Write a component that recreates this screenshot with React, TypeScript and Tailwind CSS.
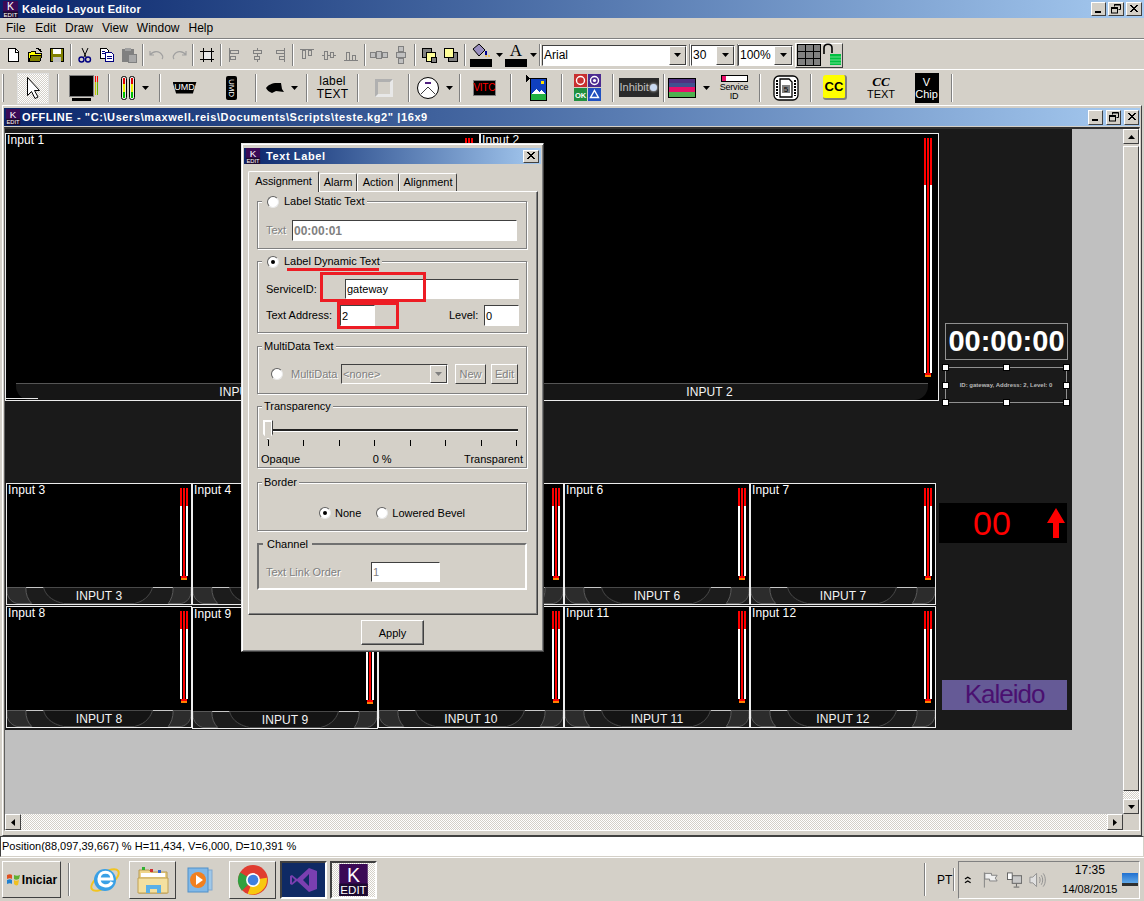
import React from 'react';

const RAISED = 'border border-t-white border-l-white border-r-[#404040] border-b-[#404040] bg-[#d4d0c8]';
const SUNKEN = 'border border-t-[#404040] border-l-[#404040] border-r-white border-b-white bg-white';
const HATCH = 'bg-[repeating-conic-gradient(#d4d0c8_0_25%,#fff_0_50%)] bg-[length:2px_2px]';

function KLogo({ className = 'w-[16px] h-[18px]' }: { className?: string }) {
  return (
    <svg viewBox="0 0 16 18" className={className + ' shrink-0'}>
      <rect width="16" height="18" fill="#3b0a56" />
      <rect y="11" width="16" height="7" fill="#1c0a30" />
      <text x="8" y="10" textAnchor="middle" fontSize="11" fill="#fff" fontFamily="Liberation Sans">K</text>
      <text x="8" y="17" textAnchor="middle" fontSize="6.5" fill="#fff" fontFamily="Liberation Sans">EDIT</text>
    </svg>
  );
}

function WinBtn({ kind, className = 'w-[15px] h-[14px]' }: { kind: 'min' | 'max' | 'close'; className?: string }) {
  return (
    <div className={RAISED + ' flex items-center justify-center ' + className}>
      <svg viewBox="0 0 12 10" className="w-[12px] h-[10px]">
        {kind === 'min' && <rect x="2" y="7" width="6" height="2" fill="#000" />}
        {kind === 'max' && (
          <g fill="none" stroke="#000">
            <path d="M4.5 2.5V.5h6v5H8.5" />
            <path d="M4 1h6.5" />
            <rect x="1.5" y="3.5" width="6" height="5.5" />
            <path d="M1.5 4.5h6" />
          </g>
        )}
        {kind === 'close' && <path d="M2 1l7 7M3 1l7 7M9 1L2 8M10 1L3 8" stroke="#000" fill="none" />}
      </svg>
    </div>
  );
}

function Sep1() {
  return <div className="w-[6px] h-[22px] shrink-0 flex justify-center"><div className="w-[2px] h-full border-l border-l-[#808080] border-r border-r-white" /></div>;
}
function Sep2() {
  return <div className="w-[2px] h-[28px] shrink-0 border-l border-l-[#808080] border-r border-r-white" />;
}

function TB({ children }: { children: React.ReactNode }) {
  return <div className="w-[22px] h-[22px] shrink-0 flex items-center justify-center">{children}</div>;
}

function Ico({ children, w = 16, h = 16 }: { children: React.ReactNode; w?: number; h?: number }) {
  return <svg width={w} height={h} viewBox={`0 0 ${w} ${h}`} fill="none" shapeRendering="crispEdges">{children}</svg>;
}

const AlignH = ({ a }: { a: number }) => (
  <Ico>
    <g fill="#808080" stroke="#808080">
      <path d={a === 0 ? 'M2.5 1v14' : a === 1 ? 'M8.5 1v14' : 'M13.5 1v14'} />
      <rect x={a === 0 ? 3 : a === 1 ? 4 : 5} y="3" width="8" height="3" fill="#d4d0c8" />
      <rect x={a === 0 ? 3 : a === 1 ? 5 : 8} y="9" width="5" height="3" fill="#d4d0c8" />
    </g>
  </Ico>
);
const AlignV = ({ a }: { a: number }) => (
  <Ico>
    <g fill="#808080" stroke="#808080">
      <path d={a === 0 ? 'M1 2.5h14' : a === 1 ? 'M1 8.5h14' : 'M1 13.5h14'} />
      <rect x="3" y={a === 0 ? 3 : a === 1 ? 4 : 5} width="3" height="8" fill="#d4d0c8" />
      <rect x="9" y={a === 0 ? 3 : a === 1 ? 5 : 8} width="3" height="5" fill="#d4d0c8" />
    </g>
  </Ico>
);

function Combo({ text, className, arrow, dis }: { text: string; className: string; arrow: string; dis?: boolean }) {
  return (
    <div className={SUNKEN + ' flex items-stretch ' + className}>
      <div className={'flex-1 pl-[1px] flex items-center overflow-hidden leading-none ' + (dis ? 'bg-[#d4d0c8] text-[#808080] [text-shadow:1px_1px_0_#fff]' : '')}>{text}</div>
      <div className={RAISED + ' flex items-center justify-center ' + arrow}>
        <svg width="7" height="4" viewBox="0 0 7 4"><path d="M0 0h7L3.5 4z" fill={dis ? '#808080' : '#000'} /></svg>
      </div>
    </div>
  );
}

function Drop() {
  return <svg width="7" height="4" viewBox="0 0 7 4" className="shrink-0"><path d="M0 0h7L3.5 4z" fill="#000" /></svg>;
}

function Slot({ w = 'w-[49px]', children }: { w?: string; children?: React.ReactNode }) {
  return <div className={w + ' h-[30px] shrink-0 flex items-center justify-center gap-[7px]'}>{children}</div>;
}

function Toolbar1() {
  return (
    <div className="h-[32px] shrink-0 flex items-center pl-[2px] pt-[2px] border-t border-t-[#808080] border-b border-b-white shadow-[inset_0_1px_0_#fff]">
      <TB><Ico><path d="M3.5 1.5h7l3 3v10h-10z" fill="#fff" stroke="#000" /><path d="M10 2v3h3" stroke="#000" /></Ico></TB>
      <TB><Ico><path d="M1.5 14.5V5.5h2l1-1h4v2h6l-2 8z" fill="#ffff00" stroke="#000" /><path d="M2 14l2-6h11l-2 6z" fill="#808000" stroke="#000" /><path d="M9 2c2-1 3 0 4 2M13 2v2h2" stroke="#000" /></Ico></TB>
      <TB><Ico><rect x="1.5" y="1.5" width="13" height="13" fill="#808000" stroke="#000" /><rect x="4" y="2" width="8" height="5" fill="#fff" /><rect x="4" y="10" width="8" height="5" fill="#c0c0c0" /></Ico></TB>
      <Sep1 />
      <TB><svg width="16" height="16" viewBox="0 0 16 16" fill="none"><path d="M5 1l4 9M11 1L7 10" stroke="#000" /><circle cx="4.5" cy="12.5" r="2.5" stroke="#000080" strokeWidth="1.4" /><circle cx="11" cy="12.5" r="2.5" stroke="#000080" strokeWidth="1.4" /></svg></TB>
      <TB><Ico><path d="M1.5 1.5h6l2 2v8h-8z" fill="#fff" stroke="#000" /><path d="M6.5 5.5h6l2 2v7h-8z" fill="#fff" stroke="#000080" /><path d="M8 9h5M8 11h5M3 4h3M3 6h3" stroke="#000080" /></Ico></TB>
      <TB><Ico><rect x="1.5" y="2.5" width="11" height="12" fill="#808080" stroke="#808080" /><rect x="4" y="1" width="6" height="3" fill="#a0a0a0" /><rect x="7" y="7" width="8" height="8" fill="#a8a8a8" stroke="#808080" /></Ico></TB>
      <Sep1 />
      <TB><svg width="16" height="10" viewBox="0 0 16 10" fill="none"><path d="M1 1v4h4M1 5c3-4 9-5 12 0 1 1 1 3 0 4" stroke="#a0a0a0" strokeWidth="1.2" /></svg></TB>
      <TB><svg width="16" height="10" viewBox="0 0 16 10" fill="none"><path d="M15 1v4h-4M15 5C12 1 6 0 3 5c-1 1-1 3 0 4" stroke="#a0a0a0" strokeWidth="1.2" /></svg></TB>
      <Sep1 />
      <TB><Ico w={16} h={16}><path d="M4.5 1v14M12.5 1v14M1 4.5h14M1 12.5h14" stroke="#000" /><rect x="5" y="5" width="7" height="7" fill="#e8e8e8" /></Ico></TB>
      <Sep1 />
      <TB><AlignH a={0} /></TB>
      <TB><AlignH a={1} /></TB>
      <TB><AlignH a={2} /></TB>
      <Sep1 />
      <TB><AlignV a={0} /></TB>
      <TB><AlignV a={1} /></TB>
      <TB><AlignV a={2} /></TB>
      <Sep1 />
      <TB><Ico w={18} h={12}><g fill="#c0c0c0" stroke="#808080"><rect x="0.5" y="3.5" width="5" height="5" /><rect x="6.5" y="2.5" width="5" height="7" /><rect x="12.5" y="3.5" width="5" height="5" /></g></Ico></TB>
      <TB><Ico w={12} h={18}><g fill="#c0c0c0" stroke="#808080"><rect x="3.5" y="0.5" width="5" height="5" /><rect x="1.5" y="6.5" width="9" height="5" /><rect x="3.5" y="12.5" width="5" height="5" /></g></Ico></TB>
      <Sep1 />
      <TB><Ico><rect x="1.5" y="1.5" width="9" height="9" fill="#808080" stroke="#000" /><rect x="5.5" y="5.5" width="9" height="9" fill="#ffff99" stroke="#000" /><rect x="10" y="10" width="5" height="5" fill="#808080" stroke="#000" /></Ico></TB>
      <TB><Ico><rect x="5.5" y="5.5" width="9" height="9" fill="#808080" stroke="#000" /><rect x="1.5" y="1.5" width="9" height="9" fill="#ffff99" stroke="#000" /></Ico></TB>
      <Sep1 />
      <div className="w-[24px] h-[24px] shrink-0 flex flex-col items-center justify-between ml-[1px]">
        <svg width="22" height="15" viewBox="0 0 22 15" fill="none"><path d="M3 6l6-5 6 6-6 6z" fill="#9a8fc0" stroke="#000" /><path d="M16 8v4" stroke="#000090" strokeWidth="2" /><path d="M15 13h2M18 13h2" stroke="#ffb000" /></svg>
        <div className="w-[22px] h-[8px] bg-black" />
      </div>
      <div className="ml-[3px] w-[7px] flex shrink-0"><Drop /></div>
      <div className="ml-[1px] w-[24px] h-[24px] shrink-0 flex flex-col items-center justify-between">
        <span className="text-[17px] leading-[15px] font-['Liberation_Serif',serif] text-black">A</span>
        <div className="w-[22px] h-[8px] bg-black" />
      </div>
      <div className="ml-[2px] w-[7px] flex shrink-0"><Drop /></div>
      <Sep1 />
      <Combo text="Arial" className="w-[145px] h-[21px] text-[12px] ml-[-1px]" arrow="w-[17px]" />
      <Sep1 />
      <Combo text="30" className="w-[44px] h-[21px] text-[12px] ml-[-2px]" arrow="w-[18px]" />
      <Sep1 />
      <Combo text="100%" className="w-[55px] h-[21px] text-[12px] ml-[-3px]" arrow="w-[18px]" />
      <div className={RAISED + ' ml-[2px] w-[48px] h-[25px] flex items-center gap-[1px] pl-[1px] shrink-0'}>
        <svg width="24" height="22" viewBox="0 0 24 22" fill="none" shapeRendering="crispEdges"><rect width="24" height="22" fill="#000" /><rect x="1" y="1" width="22" height="20" fill="#808080" /><path d="M1 7.5h22M1 14.5h22M8.5 1v20M16 1v20" stroke="#000" /></svg>
        <svg width="20" height="24" viewBox="0 0 20 24" fill="none"><path d="M2 11V5c0-5 8-5 8 0v5" stroke="#000" strokeWidth="1.6" /><rect x="8" y="11" width="11" height="11" fill="#00c040" /><path d="M8 14h11M8 17h11M8 20h11" stroke="#70e090" /></svg>
      </div>
    </div>
  );
}

const Toolbar2 = () => (
  <div className="h-[35px] shrink-0 flex items-center pl-[2px]">
    <div className="w-[2px] h-[28px] mr-[4px] border-l border-l-white border-r border-r-[#808080] shrink-0" />
    <div className="w-[49px] h-[30px] flex justify-center shrink-0">
      <div className={HATCH + ' w-[32px] h-[31px] border border-[#e0e0e0] flex items-center justify-center'}>
        <svg width="14" height="24" viewBox="0 0 14 24"><path d="M1.5 1.5v18l4-4 3.5 7 3-1.5-3.5-6.5h5z" fill="#fff" stroke="#000" /></svg>
      </div>
    </div>
    <Sep2 />
    <Slot>
      <svg width="30" height="26" viewBox="0 0 30 26" fill="none" shapeRendering="crispEdges"><rect x="0.5" y="0.5" width="24" height="21" fill="#000" stroke="#808080" /><path d="M3 24h19" stroke="#000" strokeWidth="3" /><rect x="26" y="1" width="1" height="6" fill="#f00" /><rect x="28" y="1" width="1" height="6" fill="#f00" /><rect x="26" y="7" width="1" height="13" fill="#c8c800" /><rect x="28" y="7" width="1" height="13" fill="#60b000" /></svg>
    </Slot>
    <Sep2 />
    <Slot>
      <svg width="14" height="24" viewBox="0 0 14 24" fill="none"><rect x="0.5" y="0.5" width="5" height="23" rx="2" fill="#e8e8e8" stroke="#000" /><rect x="8.5" y="0.5" width="5" height="23" rx="2" fill="#e8e8e8" stroke="#000" /><rect x="2" y="2" width="2" height="6" fill="#e00000" /><rect x="10" y="2" width="2" height="6" fill="#e00000" /><rect x="2" y="8" width="2" height="8" fill="#f0f000" /><rect x="10" y="8" width="2" height="8" fill="#f0f000" /><rect x="2" y="16" width="2" height="6" fill="#00c000" /><rect x="10" y="16" width="2" height="6" fill="#00c000" /></svg>
      <Drop />
    </Slot>
    <Sep2 />
    <Slot w="w-[47px]">
      <div className="w-[24px] h-[12px] bg-black text-white text-[9px] leading-[11px] text-center [clip-path:polygon(0_0,100%_0,85%_100%,15%_100%)]">UMD</div>
    </Slot>
    <Slot w="w-[47px]">
      <div className="w-[11px] h-[24px] bg-black rounded-[2px] text-white text-[8px] flex items-center justify-center overflow-hidden"><span className="rotate-90 leading-none">UMD</span></div>
    </Slot>
    <Sep2 />
    <Slot>
      <svg width="18" height="10" viewBox="0 0 18 10"><path d="M0 5C2 2 6 0 11 0h4l1 6 2 3-8-1-4 2C3 9 1 7 0 5z" fill="#000" /></svg>
      <Drop />
    </Slot>
    <Sep2 />
    <Slot>
      <div className="flex flex-col items-center text-[12px] leading-[13px] text-black tracking-[0.2px]"><span>label</span><span>TEXT</span></div>
    </Slot>
    <Sep2 />
    <Slot>
      <div className="w-[18px] h-[18px] border-[3px] border-t-[#b0b0b0] border-l-[#b0b0b0] border-r-[#e8e8e8] border-b-[#e8e8e8] bg-[#d4d0c8]" />
    </Slot>
    <Sep2 />
    <Slot>
      <svg width="22" height="22" viewBox="0 0 22 22" fill="none"><circle cx="11" cy="11" r="10.5" fill="#fff" stroke="#000" /><rect x="8" y="5" width="6" height="2" fill="#502080" /><path d="M4 17l7-7 7 7" stroke="#404040" /></svg>
      <Drop />
    </Slot>
    <Sep2 />
    <Slot>
      <div className="w-[23px] h-[16px] bg-black border border-[#808080] text-[#ff0000] text-[10px] leading-[14px] text-center tracking-[-0.3px] mr-[3px]">VITC</div>
    </Slot>
    <Sep2 />
    <Slot>
      <svg width="22" height="26" viewBox="0 0 22 26" fill="none" shapeRendering="crispEdges"><path d="M0 0l4 3.5L0 7z" fill="#000" /><rect x="4.5" y="3.5" width="16" height="22" fill="#1040c0" stroke="#000" /><rect x="5" y="19" width="15" height="6" fill="#20b040" /><path d="M6 19l4-5 3 3 2-2 4 4z" fill="#fff" /><rect x="15" y="6" width="3" height="3" fill="#ffe000" /></svg>
    </Slot>
    <Sep2 />
    <Slot>
      <svg width="27" height="27" viewBox="0 0 27 27" fill="none"><rect width="13" height="13" fill="#c83030" /><rect x="14" width="13" height="13" fill="#4b2a90" /><rect y="14" width="13" height="13" fill="#209040" /><rect x="14" y="14" width="13" height="13" fill="#2050c0" /><circle cx="6.5" cy="6.5" r="4" stroke="#fff" strokeWidth="1.4" /><circle cx="20.5" cy="6.5" r="4" stroke="#fff" strokeWidth="1.4" /><circle cx="20.5" cy="6.5" r="1.6" fill="#fff" /><path d="M20.5 16.5l4 7h-8z" stroke="#fff" strokeWidth="1.4" /><text x="6.5" y="24" textAnchor="middle" fontSize="7.5" fontWeight="bold" fill="#fff" fontFamily="Liberation Sans">OK</text></svg>
    </Slot>
    <Sep2 />
    <Slot>
      <div className="w-[40px] h-[19px] bg-[#2a2a2a] text-[#c0c0c0] text-[11px] leading-[19px] pl-[1px] flex items-center gap-[1px] shrink-0">Inhibit<span className="w-[7px] h-[7px] rounded-full bg-[#c8d8f0] shadow-[0_0_3px_#fff]" /></div>
    </Slot>
    <Sep2 />
    <Slot w="w-[47px]">
      <svg width="28" height="20" viewBox="0 0 28 20" shapeRendering="crispEdges"><rect width="28" height="20" fill="#000" /><rect x="1" y="1" width="26" height="4" fill="#503080" /><rect x="1" y="5" width="26" height="4" fill="#405090" /><rect x="1" y="9" width="26" height="5" fill="#e8106a" /><rect x="1" y="14" width="26" height="5" fill="#50b050" /></svg>
      <Drop />
    </Slot>
    <Slot w="w-[47px]">
      <div className="flex flex-col items-center leading-[9px] text-[9px] tracking-[-0.2px] text-black mr-[3px]">
        <div className="w-[27px] h-[7px] border border-black bg-white mb-[1px] flex"><div className="w-[4px] bg-[#e8106a]" /></div>
        <span>Service</span><span>ID</span>
      </div>
    </Slot>
    <Sep2 />
    <Slot>
      <svg width="26" height="26" viewBox="0 0 26 26" fill="none"><rect x="1" y="1" width="24" height="24" rx="5" fill="#fff" stroke="#000" strokeWidth="1.3" /><path d="M7 4h9l3 3v15H7z" fill="#fff" stroke="#000" strokeWidth="1.3" /><path d="M4 5v16M22 5v16" stroke="#000" strokeWidth="2" strokeDasharray="2 1" /><rect x="9" y="10" width="8" height="8" fill="#808080" /><text x="13" y="17" textAnchor="middle" fontSize="8" fill="#000" fontFamily="Liberation Sans">5</text></svg>
    </Slot>
    <Sep2 />
    <Slot w="w-[46px]">
      <div className="w-[24px] h-[25px] rounded-[3px] bg-[#ffff00] border-r-2 border-b-2 border-r-[#808080] border-b-[#808080] text-black text-[13px] font-bold flex items-center justify-center leading-none">CC</div>
    </Slot>
    <Slot w="w-[46px]">
      <div className="flex flex-col items-center text-[11px] leading-[12px] text-black"><span className="italic font-bold font-['Liberation_Serif',serif] text-[13px] leading-[12px]">CC</span><span>TEXT</span></div>
    </Slot>
    <Slot w="w-[47px]">
      <div className="w-[24px] h-[30px] bg-black text-white text-[11px] leading-[12px] text-center pt-[3px] mr-[2px]">V<br />Chip</div>
    </Slot>
    <Sep2 />
  </div>
);

function Meter({ big }: { big?: boolean }) {
  return (
    <div className={'absolute flex flex-col w-[8px] ' + (big ? 'right-[6px] top-[4px] h-[239px]' : 'right-[3px] top-[4px] h-[92px]')}>
      <div className={(big ? 'h-[47px]' : 'h-[18px]') + ' shrink-0 flex justify-between'}>
        <div className="w-[2px] bg-[#f00]" /><div className="w-[2px] bg-[#f00]" /><div className="w-[2px] bg-[#f00]" />
      </div>
      <div className="flex-1 flex justify-between">
        <div className="w-[2px] bg-white" /><div className="w-[2px] bg-[#f00]" /><div className="w-[2px] bg-white" />
      </div>
      <div className="h-[2px] mx-[1px] bg-[#f00]" />
      <div className="h-[2px] mx-[1px] bg-[#ff8000]" />
    </div>
  );
}

function Footer({ label, big }: { label: string; big?: boolean }) {
  return (
    <div className="absolute left-0 right-0 bottom-0 h-[17px] flex items-center justify-center">
      {big ? (
        <>
          <div className="absolute left-[10px] right-[10px] top-0 bottom-0 bg-[#161616] border-t border-t-[#555] rounded-bl-[14px] rounded-br-[14px]" />
          <div className="absolute left-0 w-[32px] bottom-[1px] h-[1px] bg-[#e8e8e8]" />
        </>
      ) : (
        <svg className="absolute inset-0 w-full h-full" viewBox="0 0 186 17" preserveAspectRatio="none" fill="none">
          <rect width="186" height="17" fill="#1c1c1c" />
          <path d="M19 .5h19M147 .5h21" stroke="#c8c8c8" />
          <path d="M37 .5c1 3 3 12 20 16h72c13-3 17-12 18-16z" fill="#141414" stroke="#4a4a4a" />
          <path d="M0 .5h19c0 7 2 12 6 16H10C4 15 0 10 0 4z" fill="#2c2c2c" stroke="#5a5a5a" />
          <path d="M186 .5h-18c0 7-2 12-5 16h13c6-1 10-6 10-12z" fill="#2c2c2c" stroke="#5a5a5a" />
        </svg>
      )}
      <span className="relative text-[12px] tracking-[0.1px] text-[#f4f4f4] leading-none">{label}</span>
    </div>
  );
}

function Tile({ name, label, className, big }: { name: string; label: string; className: string; big?: boolean }) {
  return (
    <div className={'relative shrink-0 bg-black border border-[#ececec] ' + className}>
      <div className="pl-[1px] text-[12px] leading-[13px] text-white tracking-[0.1px]">{name}</div>
      <Meter big={big} />
      <Footer label={label} big={big} />
    </div>
  );
}

function Radio({ on, dis }: { on?: boolean; dis?: boolean }) {
  return (
    <div className={'w-[12px] h-[12px] rounded-full border border-t-[#606060] border-l-[#606060] border-r-[#e8e8e8] border-b-[#e8e8e8] flex items-center justify-center shrink-0 bg-white ' + (dis ? 'bg-[#f0f0f0]' : '')}>
      {on && <div className="w-[4px] h-[4px] rounded-full bg-black" />}
    </div>
  );
}

function Group({ title, className, children, ch }: { title: React.ReactNode; className: string; children?: React.ReactNode; ch?: boolean }) {
  return (
    <div className={(ch ? 'border-2 border-t-[#707070] border-l-[#707070] border-r-white border-b-white ' : 'border border-[#808080] shadow-[1px_1px_0_#fff,inset_1px_1px_0_#fff] ') + 'relative w-[270px] shrink-0 ' + className}>
      <div className="absolute left-[4px] top-[-7px] bg-[#d4d0c8] leading-[13px] px-[2px] flex items-center gap-[5px]">{title}</div>
      {children}
    </div>
  );
}

function TextBox({ text, className, dis }: { text: string; className: string; dis?: boolean }) {
  return <div className={SUNKEN + ' flex items-center pl-[1px] pt-[1px] shrink-0 leading-none text-[11px] ' + (dis ? 'text-[#808080] ' : 'text-black ') + className}>{text}</div>;
}

const DIS = 'text-[#808080] [text-shadow:1px_1px_0_#fff]';
const TAB = 'h-[18px] border-l border-t border-r border-l-white border-t-white border-r-[#404040] rounded-t-[2px] text-center leading-[17px] text-[11px]';

function TextLabelDialog() {
  return (
    <div className="absolute left-[241px] top-[143px] w-[303px] h-[509px] bg-[#d4d0c8] border border-t-[#e8e8e8] border-l-[#e8e8e8] border-r-[#404040] border-b-[#404040] p-[2px] text-[11px] text-black shadow-[inset_1px_1px_0_#fff,inset_-1px_-1px_0_#808080]">
      <div className="h-[16px] mt-[2px] flex items-center pr-[2px] bg-gradient-to-r from-[#0a246a] to-[#a6caf0]">
        <KLogo className="w-[16px] h-[16px] ml-[1px]" />
        <span className="ml-[5px] flex-1 text-white font-bold text-[11px] tracking-[0.6px]">Text Label</span>
        <WinBtn kind="close" className="w-[16px] h-[13px]" />
      </div>
      <div className="flex items-end h-[21px] mt-[6px] ml-[4px] relative z-10">
        <div className="w-[71px] h-[21px] mb-[-1px] bg-[#d4d0c8] border-l border-t border-r border-l-white border-t-white border-r-[#404040] rounded-t-[2px] text-center leading-[19px] text-[11px] tracking-[-0.1px]">Assignment</div>
        <div className={TAB + ' w-[38px]'}>Alarm</div>
        <div className={TAB + ' w-[42px]'}>Action</div>
        <div className={TAB + ' w-[58px]'}>Alignment</div>
      </div>
      <div className="ml-[4px] w-[290px] h-[424px] border border-t-white border-l-white border-r-[#404040] border-b-[#404040] shadow-[inset_-1px_-1px_0_#808080] pl-[8px] pt-[9px] flex flex-col">
        <Group className="h-[48px]" title={<><div className="ml-[3px]"><Radio /></div><span>Label Static Text</span></>}>
          <div className="flex items-center pl-[8px] pt-[18px] gap-[4px]">
            <span className={DIS + ' w-[22px]'}>Text</span>
            <TextBox dis text="00:00:01" className="w-[225px] h-[21px] font-bold text-[12px]" />
          </div>
        </Group>
        <Group className="h-[72px] mt-[12px]" title={<><div className="ml-[3px]"><Radio on /></div><span>Label Dynamic Text</span></>}>
          <div className="flex items-center pl-[8px] pt-[17px]">
            <span className="w-[79px]">ServiceID:</span>
            <TextBox text="gateway" className="w-[174px] h-[20px]" />
          </div>
          <div className="flex items-center pl-[8px] pt-[6px]">
            <span className="w-[74px]">Text Address:</span>
            <TextBox text="2" className="w-[35px] h-[21px]" />
            <span className="ml-[74px] w-[35px]">Level:</span>
            <TextBox text="0" className="w-[35px] h-[21px]" />
          </div>
        </Group>
        <Group className="h-[48px] mt-[13px]" title={<span>MultiData Text</span>}>
          <div className="flex items-center pl-[13px] pt-[17px]">
            <Radio dis />
            <span className={DIS + ' ml-[8px] w-[50px]'}>MultiData</span>
            <Combo dis text="<none>" className="w-[107px] h-[20px] text-[11px]" arrow="w-[17px]" />
            <div className={RAISED + ' ' + DIS + ' ml-[7px] w-[31px] h-[20px] text-center leading-[18px]'}>New</div>
            <div className={RAISED + ' ' + DIS + ' ml-[5px] w-[27px] h-[20px] text-center leading-[18px]'}>Edit</div>
          </div>
        </Group>
        <Group className="h-[62px] mt-[12px]" title={<span>Transparency</span>}>
          <div className="relative h-[23px] mt-[13px] mx-[5px] flex items-center">
            <div className="absolute left-0 top-0 w-[10px] h-[20px] bg-[#d4d0c8] border border-t-white border-l-white border-r-[#404040] [clip-path:polygon(0_0,100%_0,100%_70%,50%_100%,0_70%)] shadow-[inset_0_0_0_1px_#fff]" />
            <div className="ml-[10px] w-[245px] h-[2px] mt-[-4px] bg-[#222] shadow-[0_1px_0_#fff]" />
          </div>
          <div className="flex justify-between w-[249px] ml-[10px] mt-[-3px]">
            {[0, 1, 2, 3, 4, 5, 6, 7].map((i) => <div key={i} className="w-[1px] h-[6px] bg-black" />)}
          </div>
          <div className="flex justify-between px-[3px] mt-[7px] leading-[13px]"><span>Opaque</span><span>0 %</span><span>Transparent</span></div>
        </Group>
        <Group className="h-[49px] mt-[14px]" title={<span>Border</span>}>
          <div className="flex items-center pl-[61px] pt-[22px]">
            <Radio on /><span className="ml-[4px]">None</span>
            <div className="ml-[15px]"><Radio /></div><span className="ml-[4px]">Lowered Bevel</span>
          </div>
        </Group>
        <Group ch className="h-[47px] mt-[12px]" title={<span className="px-[2px]">Channel</span>}>
          <div className="flex items-center pl-[7px] pt-[17px]">
            <span className={DIS + ' w-[105px]'}>Text Link Order</span>
            <TextBox dis text="1" className="w-[69px] h-[20px]" />
          </div>
        </Group>
      </div>
      <div className={RAISED + ' mt-[5px] ml-[117px] w-[63px] h-[25px] text-center leading-[25px] shadow-[inset_-1px_-1px_0_#808080]'}>Apply</div>
      {/* red annotation marks drawn over the dialog */}
      <div className="absolute left-[45px] top-[124px] w-[92px] h-[3px] bg-[#ed1c24]" />
      <div className="absolute left-[78px] top-[128px] w-[106px] h-[30px] border-[3px] border-[#ed1c24]" />
      <div className="absolute left-[95px] top-[158px] w-[62px] h-[27px] border-[3px] border-[#ed1c24]" />
    </div>
  );
}

function Handle({ className }: { className: string }) {
  return <div className={'absolute w-[7px] h-[7px] bg-white border border-black ' + className} />;
}

function Canvas() {
  return (
    <div className="w-[1067px] h-[601px] bg-[#1a1a1a] flex shrink-0">
      <div className="w-[935px] shrink-0 flex flex-col pt-[4px]">
        <div className="flex">
          <Tile big name="Input 1" label="INPUT 1" className="w-[475px] h-[268px]" />
          <Tile big name="Input 2" label="INPUT 2" className="w-[459px] h-[268px]" />
        </div>
        <div className="flex ml-[1px] mt-[82px]">
          <Tile name="Input 3" label="INPUT 3" className="w-[186px] h-[122px]" />
          <Tile name="Input 4" label="INPUT 4" className="w-[186px] h-[122px]" />
          <Tile name="Input 5" label="INPUT 5" className="w-[186px] h-[122px]" />
          <Tile name="Input 6" label="INPUT 6" className="w-[186px] h-[122px]" />
          <Tile name="Input 7" label="INPUT 7" className="w-[186px] h-[122px]" />
        </div>
        <div className="flex ml-[1px] mt-[1px]">
          <Tile name="Input 8" label="INPUT 8" className="w-[186px] h-[122px]" />
          <Tile name="Input 9" label="INPUT 9" className="w-[186px] h-[122px] mt-[1px]" />
          <Tile name="Input 10" label="INPUT 10" className="w-[186px] h-[122px]" />
          <Tile name="Input 11" label="INPUT 11" className="w-[186px] h-[122px]" />
          <Tile name="Input 12" label="INPUT 12" className="w-[186px] h-[122px]" />
        </div>
      </div>
      <div className="flex-1 flex flex-col items-start pl-[5px]">
        <div className="mt-[194px] w-[123px] h-[37px] border border-[#909090] text-white font-bold text-[29px] leading-[35px] text-center">00:00:00</div>
        <div className="relative mt-[7px] w-[122px] h-[36px] border border-[#909090] text-[#b8b8b8] font-bold text-[6px] leading-[34px] text-center">
          ID: gateway, Address: 2, Level: 0
          <Handle className="left-[-4px] top-[-4px]" />
          <Handle className="left-[57px] top-[-4px]" />
          <Handle className="right-[-4px] top-[-4px]" />
          <Handle className="left-[-4px] top-[14px]" />
          <Handle className="right-[-4px] top-[14px]" />
          <Handle className="left-[-4px] bottom-[-4px]" />
          <Handle className="left-[57px] bottom-[-4px]" />
          <Handle className="right-[-4px] bottom-[-4px]" />
        </div>
        <div className="mt-[100px] ml-[-6px] w-[128px] h-[40px] bg-black flex items-center">
          <span className="ml-[34px] text-[#ff0000] text-[34px] leading-none">00</span>
          <svg width="20" height="30" viewBox="0 0 20 30" className="ml-auto mr-[1px]"><path d="M10 0l9 15h-6v15H7V15H1z" fill="#f00" /></svg>
        </div>
        <div className="mt-[137px] ml-[-3px] w-[125px] h-[30px] bg-[#655a96] text-[#4a1070] text-[26px] leading-[29px] text-center tracking-[-1px]">Kaleido</div>
      </div>
    </div>
  );
}

function MdiWindow() {
  return (
    <div className="h-[731px] shrink-0 mx-[2px] border border-t-white border-l-white border-r-[#404040] border-b-[#404040] flex flex-col text-white">
      <div className="h-[18px] mt-[2px] mx-[1px] flex items-center bg-gradient-to-r from-[#0a246a] to-[#a6caf0] shrink-0">
        <KLogo className="w-[16px] h-[16px] ml-[1px]" />
        <span className="ml-[1px] flex-1 font-bold text-[11px] tracking-[0.6px] whitespace-nowrap">OFFLINE - "C:\Users\maxwell.reis\Documents\Scripts\teste.kg2" |16x9</span>
        <div className="flex gap-[3px] mr-[1px]">
          <WinBtn kind="min" className="w-[15px] h-[15px]" />
          <WinBtn kind="max" className="w-[15px] h-[15px]" />
          <WinBtn kind="close" className="w-[15px] h-[15px]" />
        </div>
      </div>
      <div className="flex-1 flex flex-col mt-[1px] mx-[1px] mb-[4px] border-t-2 border-l border-t-[#303030] border-l-[#606060] border-r border-b border-r-white border-b-white min-h-0">
        <div className="flex-1 flex min-h-0">
          <div className="flex-1 bg-[#c0c0c0] min-w-0">
            <Canvas />
          </div>
          <div className="w-[16px] flex flex-col shrink-0">
            <div className={RAISED + ' h-[15px] flex items-center justify-center shrink-0'}>
              <svg width="7" height="4" viewBox="0 0 7 4"><path d="M0 4h7L3.5 0z" fill="#000" /></svg>
            </div>
            <div className={RAISED + ' flex-1 mt-[2px]'} />
            <div className={HATCH + ' h-[8px] shrink-0'} />
            <div className={RAISED + ' h-[15px] flex items-center justify-center shrink-0'}><Drop /></div>
          </div>
        </div>
        <div className="h-[16px] flex shrink-0">
          <div className={RAISED + ' w-[16px] flex items-center justify-center'}>
            <svg width="4" height="7" viewBox="0 0 4 7"><path d="M4 0v7L0 3.5z" fill="#000" /></svg>
          </div>
          <div className={HATCH + ' flex-1'} />
          <div className={RAISED + ' w-[16px] flex items-center justify-center'}>
            <svg width="4" height="7" viewBox="0 0 4 7"><path d="M0 0v7l4-3.5z" fill="#000" /></svg>
          </div>
          <div className="w-[16px] bg-[#d4d0c8]" />
        </div>
      </div>
    </div>
  );
}

function TaskBtn({ children, on, dark, className = 'w-[47px]' }: { children: React.ReactNode; on?: boolean; dark?: boolean; className?: string }) {
  const c = on ? 'border-2 border-t-[#404040] border-l-[#404040] border-r-white border-b-white ' + (dark ? 'bg-[#0f2a64]' : HATCH) : 'border border-t-white border-l-white border-r-[#404040] border-b-[#404040] bg-[#d4d0c8]';
  return <div className={'h-[38px] shrink-0 flex items-center justify-center ' + c + ' ' + className}>{children}</div>;
}

function Taskbar() {
  return (
    <div className="flex-1 flex items-center bg-[#d4d0c8] border-t border-t-white pl-[2px] pr-[4px] text-black">
      <div className={RAISED + ' w-[59px] h-[37px] flex items-center justify-center gap-[1px] shrink-0'}>
        <svg width="15" height="14" viewBox="0 0 15 14"><path d="M1 2c2-1 4-1 5 0v4C5 5 3 5 1 6z" fill="#e05020" /><path d="M8 2c2 1 4 1 6 0l-1 4c-2 1-4 1-5 0z" fill="#60b030" /><path d="M1 7c2-1 4-1 5 0v4c-1-1-3-1-5 0z" fill="#2080d0" /><path d="M8 7c1 1 3 1 5 0l-1 5c-2 1-3 0-4-1z" fill="#f0c020" /></svg>
        <span className="font-bold text-[12px]">Iniciar</span>
      </div>
      <div className="ml-[7px] w-[2px] h-[33px] border-l border-l-[#808080] border-r border-r-white shrink-0" />
      <div className="ml-[11px] w-[47px] h-[38px] flex items-center justify-center shrink-0">
        <svg width="34" height="32" viewBox="0 0 34 32" fill="none"><ellipse cx="17" cy="16" rx="16" ry="7" transform="rotate(-35 17 16)" stroke="#f2c420" strokeWidth="2" /><circle cx="17" cy="16" r="11" fill="#39a0e6" /><path d="M10 15h14c0-9-13-9-13 0 0 8 10 9 13 3" stroke="#fff" strokeWidth="3.2" /></svg>
      </div>
      <TaskBtn className="w-[47px] ml-[1px]">
        <svg width="32" height="30" viewBox="0 0 32 30" fill="none"><path d="M2 5h10l2 2h16v21H2z" fill="#efd58a" stroke="#b89a50" /><path d="M4 8h24v4H4z" fill="#fff" /><rect x="5" y="2" width="3" height="3" fill="#30b030" /><rect x="13" y="4" width="3" height="3" fill="#d03030" /><rect x="21" y="5" width="3" height="3" fill="#3060d0" /><path d="M1 13h30v15H1z" fill="#f4e0a0" stroke="#c0a050" /><path d="M9 20h15v8h-4v-4h-7v4H9z" fill="#5ab0e8" /></svg>
      </TaskBtn>
      <div className="ml-[1px] w-[47px] h-[38px] flex items-center justify-center shrink-0">
        <svg width="30" height="30" viewBox="0 0 30 30" fill="none"><rect x="10" y="5" width="16" height="20" fill="#a0c8e8" stroke="#80a8d0" /><rect x="2" y="3" width="20" height="24" fill="#80b8e8" stroke="#5090c8" /><circle cx="12" cy="15" r="8" fill="#f08020" /><path d="M10 10l7 5-7 5z" fill="#fff" /></svg>
      </div>
      <TaskBtn className="w-[47px] ml-[5px]">
        <svg width="32" height="32" viewBox="0 0 30 30"><circle cx="15" cy="15" r="14" fill="#e03c30" /><path d="M15 15L4.5 25A14 14 0 0 1 3 8z" fill="#30a040" /><path d="M15 15l13-2a14 14 0 0 1-18 15z" fill="#f8c810" /><circle cx="15" cy="15" r="6.5" fill="#fff" /><circle cx="15" cy="15" r="5" fill="#4080e0" /></svg>
      </TaskBtn>
      <TaskBtn on dark className="w-[47px] ml-[4px]">
        <svg width="30" height="28" viewBox="0 0 30 28" fill="none"><path d="M20 2l8 3v18l-8 3L8 15l-5 4-2-1V10l2-1 5 4zM20 8l-6 6 6 6z" fill="#7a3fb0" fillRule="evenodd" /><path d="M3 11v6l3-3z" fill="#0f2a64" /></svg>
      </TaskBtn>
      <TaskBtn on className="w-[47px] ml-[3px]">
        <KLogo className="w-[33px] h-[32px]" />
      </TaskBtn>
      <div className="flex-1" />
      <div className="w-[2px] h-[33px] border-l border-l-[#808080] border-r border-r-white shrink-0" />
      <span className="ml-[11px] w-[16px] text-[12px]">PT</span>
      <div className="w-[2px] h-[23px] border-l border-l-[#808080] border-r border-r-white shrink-0" />
      <div className="ml-[3px] w-[182px] h-[38px] flex items-center shrink-0 border border-t-[#808080] border-l-[#808080] border-r-white border-b-white">
        <svg width="8" height="8" viewBox="0 0 8 8" className="ml-[5px]" fill="none"><path d="M1 3l3-2 3 2M1 7l3-2 3 2" stroke="#000" strokeWidth="1.2" /></svg>
        <svg width="18" height="18" viewBox="0 0 18 18" className="ml-[10px]" fill="#f0f0f0" stroke="#808080"><path d="M2.5 1v16M3 2h7v2h6l-2 3 2 3h-8V8H3z" /></svg>
        <svg width="16" height="18" viewBox="0 0 16 18" className="ml-[8px]" fill="#c8c8c8" stroke="#606060"><rect x="5.5" y="4.5" width="10" height="8" /><path d="M10 13v3M7 16.5h6" /><rect x="0.5" y="1.5" width="5" height="7" fill="#fff" /></svg>
        <svg width="18" height="16" viewBox="0 0 18 16" className="ml-[7px]" fill="none" stroke="#909090"><path d="M1 5h3l4-4v14l-4-4H1z" fill="#e0e0e0" /><path d="M11 5c1 2 1 4 0 6M13 3c2 3 2 7 0 10M15 1c3 4 3 10 0 14" /></svg>
        <div className="w-[68px] ml-[12px] flex flex-col items-center text-[12px] leading-[19px] whitespace-nowrap"><span>17:35</span><span className="text-[11px]">14/08/2015</span></div>
        <div className="ml-auto mr-[1px] w-[16px] h-[13px] bg-gradient-to-b from-[#2070d0] to-[#60a8e8] border-b-[3px] border-b-[#303030] shrink-0" />
      </div>
    </div>
  );
}

export default function App() {
  return (
    <div className="relative w-[1144px] h-[901px] overflow-hidden bg-[#d4d0c8] flex flex-col text-black font-['Liberation_Sans',sans-serif]">
      <div className="h-[18px] flex items-center shrink-0 bg-gradient-to-r from-[#0a246a] to-[#a6caf0]">
        <KLogo className="w-[17px] h-[17px] ml-[2px]" />
        <span className="ml-[3px] flex-1 text-white font-bold text-[11px] tracking-[0.25px]">Kaleido Layout Editor</span>
        <div className="flex gap-[2px] mr-[2px]">
          <WinBtn kind="min" className="w-[15px] h-[14px]" />
          <WinBtn kind="max" className="w-[16px] h-[14px]" />
          <WinBtn kind="close" className="w-[16px] h-[14px]" />
        </div>
      </div>
      <div className="h-[20px] flex items-center gap-[9px] pl-[6px] text-[12px] shrink-0">
        <span>File</span><span className="ml-[1px]">Edit</span><span>Draw</span><span>View</span><span>Window</span><span>Help</span>
      </div>
      <Toolbar1 />
      <Toolbar2 />
      <MdiWindow />
      <div className="h-[21px] shrink-0 bg-white border border-t-[#404040] border-l-[#404040] border-r-[#d4d0c8] border-b-[#d4d0c8] pl-[1px] text-[11px] leading-[19px] whitespace-nowrap">Position(88,097,39,667) % H=11,434, V=6,000, D=10,391 %</div>
      <Taskbar />
      <TextLabelDialog />
    </div>
  );
}
